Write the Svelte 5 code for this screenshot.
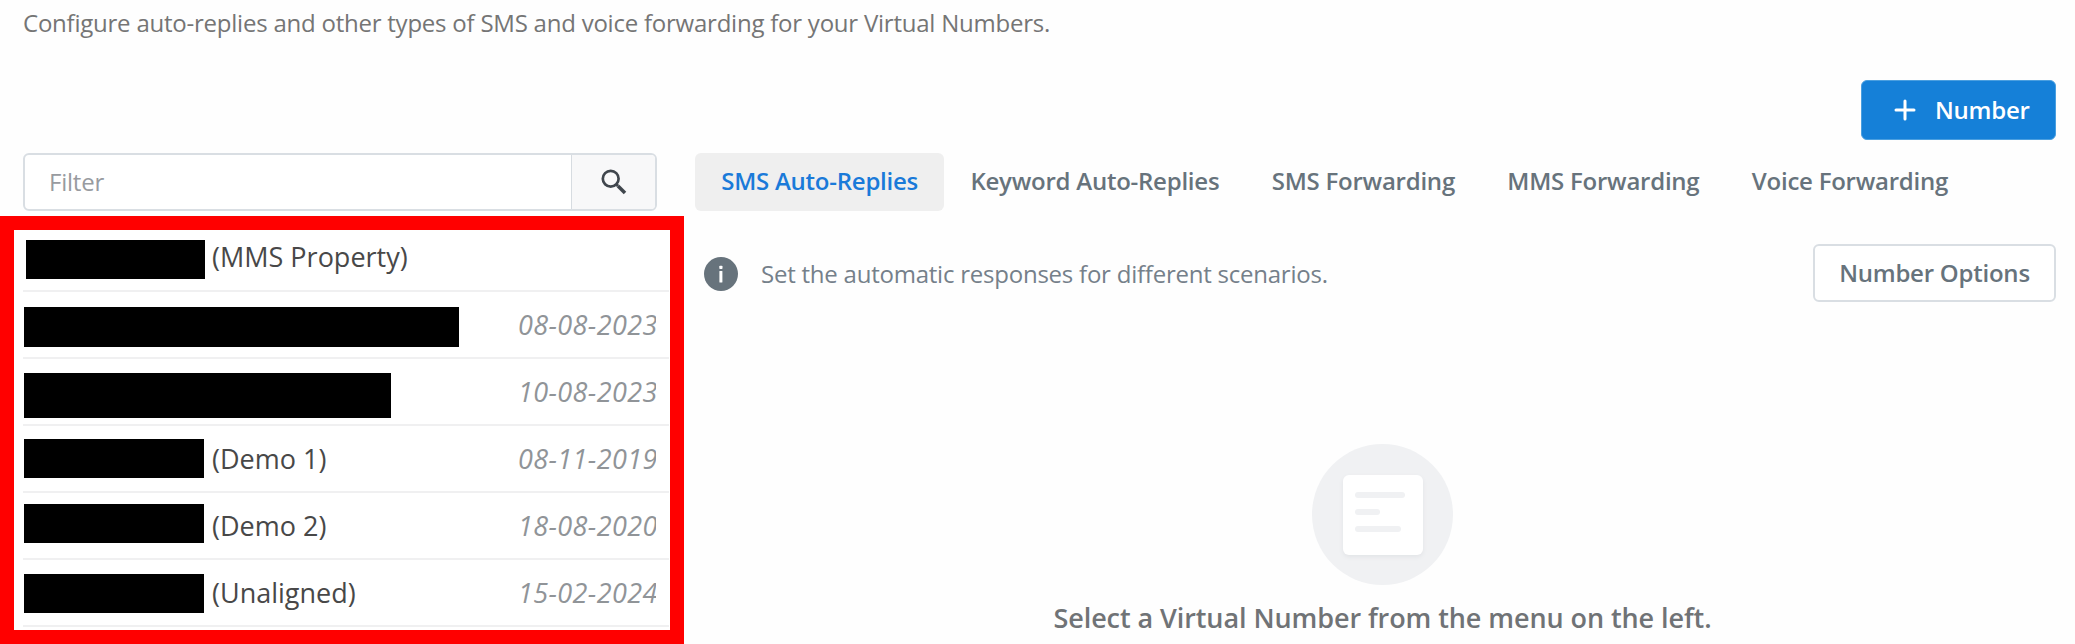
<script>
  const numbers = [
    { label: '(MMS Property)', date: '', x: 3, w: 179, y: 10, h: 39 },
    { label: '', date: '08-08-2023', x: 1, w: 435, y: 15, h: 40 },
    { label: '', date: '10-08-2023', x: 1, w: 367, y: 14, h: 45 },
    { label: '(Demo 1)', date: '08-11-2019', x: 1, w: 180, y: 13, h: 39 },
    { label: '(Demo 2)', date: '18-08-2020', x: 1, w: 180, y: 11, h: 39 },
    { label: '(Unaligned)', date: '15-02-2024', x: 1, w: 180, y: 14, h: 39 },
  ];
  const tabs = ['SMS Auto-Replies', 'Keyword Auto-Replies', 'SMS Forwarding', 'MMS Forwarding', 'Voice Forwarding'];
  let active = $state(0);
</script>

<div class="page">
  <p class="intro">Configure auto-replies and other types of SMS and voice forwarding for your Virtual Numbers.</p>
  <div class="actions">
    <button class="primary">
      <svg width="22" height="22" viewBox="0 0 22 22"><path d="M11 2V20M2 11H20" stroke="#fff" stroke-width="3" stroke-linecap="round" /></svg>
      <span>Number</span>
    </button>
  </div>
  <div class="columns">
    <aside>
      <div class="filter">
        <input placeholder="Filter" />
        <button class="search" aria-label="Search">
          <svg width="26" height="26" viewBox="0 0 26 26" fill="none" stroke="#40464d"><circle cx="9.7" cy="9.7" r="7.9" stroke-width="2.7" /><path d="M15.4 15.4L17 17" stroke-width="3" /><path d="M17 17L24 24" stroke-width="3.6" /></svg>
        </button>
      </div>
      <div class="frame">
        {#each numbers as n}
          <div class="row">
            <span class="redacted" style="width:{n.w}px;height:{n.h}px;margin-left:{n.x}px;margin-top:{n.y}px"></span>
            <span class="label">{n.label}</span>
            <span class="date">{n.date}</span>
          </div>
        {/each}
      </div>
    </aside>
    <main>
      <nav>
        {#each tabs as tab, i}
          <button class="tab" class:active={active === i} onclick={() => (active = i)}>{tab}</button>
        {/each}
      </nav>
      <section class="info">
        <svg width="34" height="34" viewBox="0 0 34 34"><circle cx="17" cy="17" r="17" fill="#67737c" /><rect x="15.3" y="8.8" width="3.2" height="3.2" rx=".8" fill="#fff" /><rect x="15.4" y="14" width="3" height="11.5" rx=".6" fill="#fff" /></svg>
        <span class="hint">Set the automatic responses for different scenarios.</span>
        <button class="options">Number Options</button>
      </section>
      <section class="empty">
        <div class="circle">
          <div class="card"><i class="long"></i><i class="short"></i><i class="mid"></i></div>
        </div>
        <p>Select a Virtual Number from the menu on the left.</p>
      </section>
    </main>
  </div>
</div>

<style>
  :global(body) { background: #fefefe; overflow: hidden; }
  * { box-sizing: border-box; }
  .page { width: 2075px; height: 644px; overflow: hidden; font-family: 'Open Sans', sans-serif; font-size: 24px; letter-spacing: -0.23px; white-space: nowrap; color: #67737c; }
  p { margin: 0; }
  button { font: inherit; letter-spacing: inherit; border: 0; padding: 0; margin: 0; color: inherit; background: none; }
  .intro { height: 80px; padding: 6px 0 0 23px; line-height: 34px; color: #757575; }
  .actions { display: flex; justify-content: flex-end; padding-right: 19px; height: 73px; }
  .primary { display: flex; align-items: center; width: 195px; height: 60px; padding-left: 32px; gap: 19px; border: 1px solid #4a9fe0; border-radius: 6px; background: #1580d8; color: #fff; font-weight: 600; }
  .primary svg { margin-top: -1px; }
  .primary span { padding-bottom: 1px; }
  .columns { display: flex; }
  aside { width: 695px; flex: none; }
  .filter { display: flex; width: 634px; height: 58px; margin-left: 23px; border: 2px solid #d9dee3; border-radius: 6px; overflow: hidden; background: #fff; }
  input { flex: 1; min-width: 0; border: 0; outline: 0; padding: 0 0 2px 24px; font: inherit; letter-spacing: inherit; background: transparent; }
  input::placeholder { color: #989ba0; opacity: 1; }
  .search { width: 84px; display: flex; align-items: center; justify-content: center; border-left: 1px solid #d7dce1; background: #f8f8f9; }
  .frame { width: 684px; height: 428px; margin-top: 5px; padding: 0 0 0 9px; border: 14px solid #f00; background: #fff; display: flex; flex-direction: column; overflow: hidden; }
  .row { flex: none; display: flex; align-items: flex-start; width: 646px; height: 67px; border-bottom: 2px solid #f0f0f1; padding-right: 13px; line-height: 36px; font-size: 27px; letter-spacing: 0; }
  .row:first-child { height: 62px; }
  .row:first-child .label { padding-top: 9px; margin-left: 7px; }
  .redacted { flex: none; background: #000; }
  .label { margin-left: 8px; padding-top: 15px; color: #484848; }
  .date { width: 138px; overflow: hidden; margin-left: auto; padding-top: 15px; font-style: italic; letter-spacing: 0.38px; color: #909498; }
  main { flex: 1; padding-right: 19px; }
  nav { display: flex; }
  .tab { height: 58px; padding: 0 26.2px 3px; border-radius: 6px; font-weight: 600; letter-spacing: -0.24px; }
  .tab.active { background: #efefef; color: #1a7ad9; }
  .info { display: flex; align-items: center; height: 58px; margin-top: 33px; padding-left: 9px; }
  .info svg { margin-top: 2px; }
  .hint { margin-left: 23px; color: #75808a; }
  .options { width: 243px; height: 58px; margin-left: auto; padding-bottom: 2px; border: 2px solid #d9dee3; border-radius: 6px; background: #fff; font-weight: 600; }
  .empty { display: flex; flex-direction: column; align-items: center; margin-top: 142px; padding-left: 14px; }
  .circle { width: 141px; height: 141px; border-radius: 50%; background: #f0f1f3; display: flex; align-items: center; justify-content: center; }
  .card { width: 80px; height: 80px; border-radius: 6px; background: #fff; box-shadow: 0 2px 4px #e2e4e7; display: flex; flex-direction: column; gap: 11px; padding: 17px 0 0 12px; }
  .card i { height: 6px; border-radius: 3px; background: #f0f1f3; }
  .long { width: 50px; }
  .short { width: 25px; }
  .mid { width: 46px; }
  .empty p { margin-top: 15px; line-height: 36px; font-size: 27px; letter-spacing: -0.08px; font-weight: 600; color: #707376; }
</style>
